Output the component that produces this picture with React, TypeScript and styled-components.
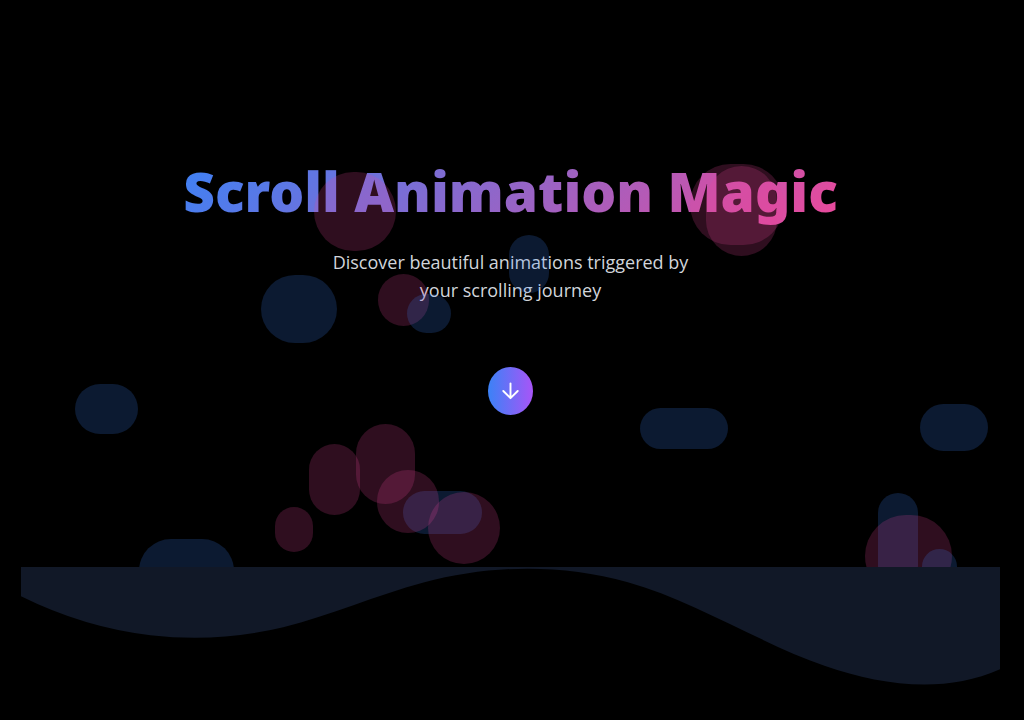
import React from "react";
import styled, { createGlobalStyle } from "styled-components";

const GlobalStyle = createGlobalStyle`
  *, *::before, *::after { box-sizing: border-box; }
  html, body, #root { height: 100%; margin: 0; }
  body {
    background: #000;
    color: #fff;
    font-family: "Open Sans", "Noto Sans", sans-serif;
  }
`;

const Page = styled.div`
  display: flex;
  flex-direction: column;
  min-height: 100%;
  padding-bottom: 25px;
`;

const Hero = styled.main`
  position: relative;
  flex: 1;
  display: flex;
  flex-direction: column;
  align-items: center;
  overflow: hidden;
  padding: 151px 24px 64px 21px;
  text-align: center;
`;

const Title = styled.h1`
  margin: 0;
  font-family: "Noto Sans", "Open Sans", sans-serif;
  font-size: 55px;
  line-height: 80px;
  font-weight: 900;
  color: transparent;
  background: linear-gradient(135deg, #3b82f6, #ec4899);
  background-clip: text;
  -webkit-background-clip: text;
`;

const Subtitle = styled.p`
  max-width: 380px;
  margin: 17px 0 0;
  font-size: 18px;
  line-height: 28px;
  color: #d1d5db;
`;

const ScrollButton = styled.button`
  display: flex;
  align-items: center;
  justify-content: center;
  width: 45px;
  height: 48px;
  margin-top: 63px;
  padding: 0;
  border: 0;
  border-radius: 50%;
  color: #fff;
  background: linear-gradient(to right, #3b82f6, #a855f7);
  cursor: pointer;
`;

const Bubbles = styled.div`
  position: absolute;
  inset: 0;
  pointer-events: none;
`;

type Tone = "blue" | "pink";

const Bubble = styled.span<{ $tone: Tone; $x: number; $y: number; $w: number; $h: number }>`
  position: absolute;
  left: calc(50% + ${(p) => p.$x - 512}px);
  top: ${(p) => p.$y}px;
  width: ${(p) => p.$w}px;
  height: ${(p) => p.$h}px;
  border-radius: 999px;
  opacity: 0.2;
  background: ${(p) => (p.$tone === "blue" ? "#3b82f6" : "#ec4899")};
`;

const WaveBand = styled.footer`
  padding: 0 24px 0 21px;
`;

const Wave = styled.svg`
  display: block;
  width: 100%;
  height: 128px;
  fill: #111827;
`;

const bubbles: [Tone, number, number, number, number][] = [
  ["blue", 261, 275, 76, 68],
  ["blue", 75, 384, 63, 50],
  ["blue", 640, 408, 88, 41],
  ["blue", 920, 404, 68, 47],
  ["blue", 509, 235, 40, 58],
  ["blue", 139, 539, 95, 64],
  ["blue", 403, 491, 79, 43],
  ["blue", 878, 493, 40, 92],
  ["pink", 314, 172, 82, 79],
  ["pink", 690, 164, 94, 81],
  ["pink", 706, 166, 71, 90],
  ["pink", 378, 274, 51, 52],
  ["pink", 309, 444, 51, 71],
  ["pink", 356, 424, 59, 80],
  ["pink", 377, 470, 62, 63],
  ["pink", 428, 492, 72, 72],
  ["pink", 275, 507, 38, 45],
  ["pink", 865, 515, 87, 82],
  ["blue", 407, 294, 44, 39],
  ["blue", 922, 549, 35, 44],
];

export default function App() {
  return (
    <>
      <GlobalStyle />
      <Page>
        <Hero>
          <Title>Scroll Animation Magic</Title>
          <Subtitle>Discover beautiful animations triggered by your scrolling journey</Subtitle>
          <ScrollButton type="button" aria-label="Scroll down">
            <svg width="23" height="24" viewBox="0 0 24 24" fill="none" stroke="currentColor" strokeWidth="2" strokeLinecap="round" strokeLinejoin="round" aria-hidden="true">
              <path d="M12 4v15M4.500 12l7.500 7.500 7.500-7.500" />
            </svg>
          </ScrollButton>
          <Bubbles aria-hidden="true">
            {bubbles.map(([tone, x, y, w, h]) => (
              <Bubble key={`${x}-${y}`} $tone={tone} $x={x} $y={y} $w={w} $h={h} />
            ))}
          </Bubbles>
        </Hero>
        <WaveBand>
          <Wave viewBox="0 0 1200 120" preserveAspectRatio="none" aria-hidden="true">
            <path d="M321.39,56.44c58-10.79,114.16-30.13,172-41.86,82.39-16.72,168.19-17.73,250.45-.39C823.78,31,906.67,72,985.66,92.83c70.05,18.48,146.53,26.09,214.34,3V0H0V27.35A600.21,600.21,0,0,0,321.39,56.44Z" />
          </Wave>
        </WaveBand>
      </Page>
    </>
  );
}
